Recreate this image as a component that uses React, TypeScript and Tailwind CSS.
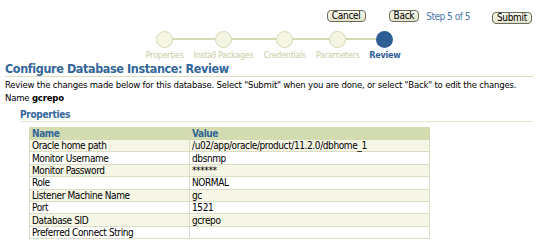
const font = "font-['DejaVu_Sans_Condensed','DejaVu_Sans',sans-serif]";

const steps = ["Properties", "Install Packages", "Credentials", "Parameters", "Review"];

const rows = [
  ["Oracle home path", "/u02/app/oracle/product/11.2.0/dbhome_1"],
  ["Monitor Username", "dbsnmp"],
  ["Monitor Password", "******"],
  ["Role", "NORMAL"],
  ["Listener Machine Name", "gc"],
  ["Port", "1521"],
  ["Database SID", "gcrepo"],
  ["Preferred Connect String", ""],
];

function Btn({ label }: { label: string }) {
  return (
    <button className="h-[12px] px-[4px] rounded-[4px] border border-[#6b6b5a] bg-gradient-to-b from-[#fbfbf0] to-[#e2e2cc] text-[10px] leading-[10px] tracking-[-0.3px] text-black">
      {label}
    </button>
  );
}

export default function App() {
  return (
    <div className={`w-[538px] h-[243px] bg-white overflow-hidden ${font}`}>
      {/* top buttons */}
      <div className="flex items-center justify-end pt-[10px] pr-[6px] h-[22px]">
        <Btn label="Cancel" />
        <div className="flex items-center ml-[23px]">
          <Btn label="Back" />
          <span className="ml-[7px] text-[10px] tracking-[-0.5px] text-[#4a78b0]">Step 5 of 5</span>
        </div>
        <div className="ml-[22px]">
          <Btn label="Submit" />
        </div>
      </div>

      {/* train */}
      <div className="flex justify-center mt-[9px] pl-[8px]">
        <div className="relative flex gap-[10px]">
          <div className="absolute top-[7px] left-[18px] right-[14px] h-[2px] bg-[#d6d9b4]" />
          {steps.map((s, i) => {
            const active = i === steps.length - 1;
            return (
              <div key={s} className="relative flex flex-col items-center">
                <div
                  className={
                    active
                      ? "w-[17px] h-[17px] rounded-full bg-[#2f5e96]"
                      : "w-[17px] h-[17px] rounded-full bg-[#f5f5e3] border border-[#d6d9b4]"
                  }
                />
                <span
                  className={
                    active
                      ? "mt-[2px] text-[9px] leading-[11px] tracking-[-0.3px] font-bold text-[#2f5e96]"
                      : "mt-[2px] text-[9px] leading-[11px] tracking-[-0.3px] text-[#c9cca2]"
                  }
                >
                  {s}
                </span>
              </div>
            );
          })}
        </div>
      </div>

      {/* title */}
      <div className="mx-[5px] border-b border-[#dcdcc0]">
        <h1 className="text-[12.5px] leading-[15px] tracking-[-0.4px] font-bold text-[#336699]">
          Configure Database Instance: Review
        </h1>
      </div>
      <p className="px-[5px] mt-[1px] text-[9.5px] leading-[13px] tracking-[-0.2px] text-black whitespace-nowrap">
        Review the changes made below for this database. Select "Submit" when you are done, or select "Back" to edit the changes.
      </p>
      <p className="px-[5px] text-[9.5px] leading-[13px] tracking-[-0.2px] text-black">
        Name <span className="font-bold">gcrepo</span>
      </p>

      {/* properties */}
      <div className="ml-[20px] mr-[5px] mt-[5px] border-b border-[#e6e6cf]">
        <h2 className="text-[10px] leading-[12px] tracking-[-0.3px] font-bold text-[#336699]">Properties</h2>
      </div>
      <table className="ml-[29px] mt-[5px] w-[401px] border-collapse text-[10px] leading-[11px] tracking-[-0.4px] text-black">
        <thead>
          <tr className="bg-[#d3dbb0]">
            <th className="w-[160px] h-[11px] px-[2px] text-left font-bold text-[#336699] border border-[#d3dbb0]">Name</th>
            <th className="h-[11px] px-[2px] text-left font-bold text-[#336699] border border-[#d3dbb0]">Value</th>
          </tr>
        </thead>
        <tbody>
          {rows.map(([n, v], i) => (
            <tr key={n} className={i % 2 === 0 ? "bg-[#f6f6e6]" : "bg-white"}>
              <td className="h-[12.4px] px-[2px] border border-[#dcdcc2]">{n}</td>
              <td className="h-[12.4px] px-[2px] border border-[#dcdcc2]">{v}</td>
            </tr>
          ))}
        </tbody>
      </table>
    </div>
  );
}
